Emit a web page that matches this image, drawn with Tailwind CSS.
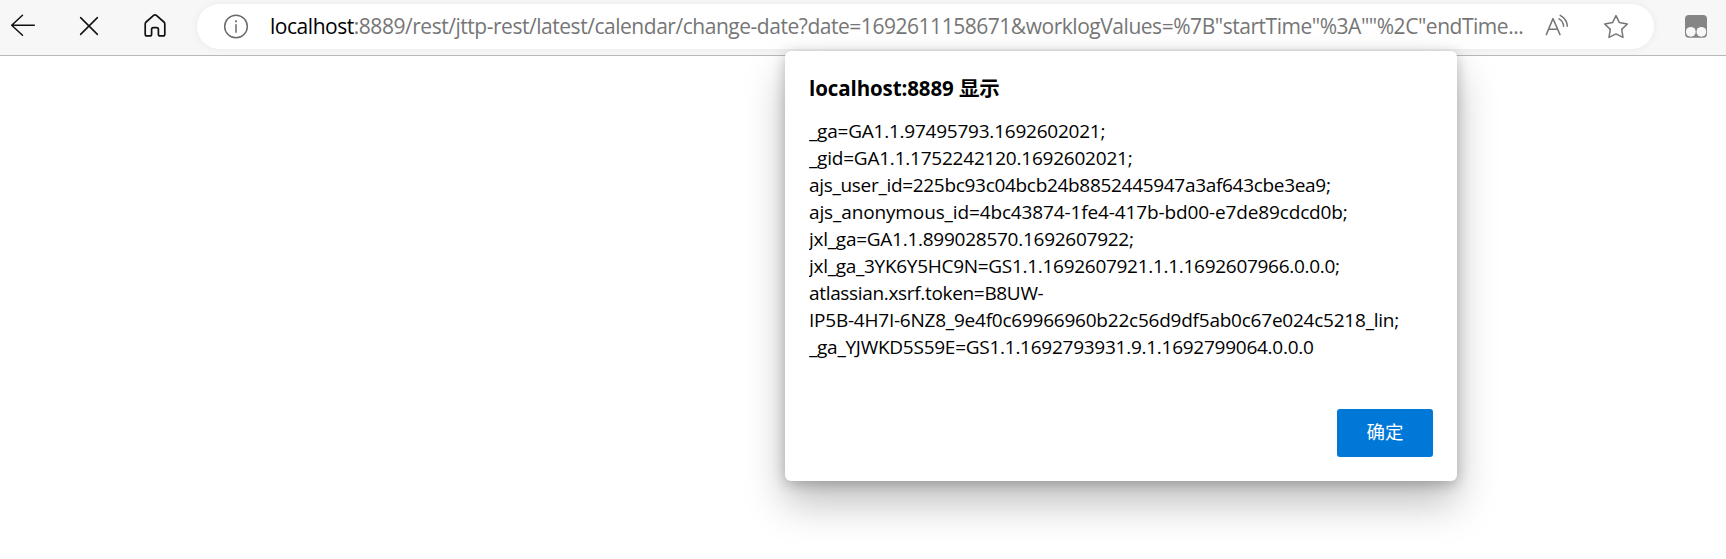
<!DOCTYPE html>
<html lang="zh-CN">
<head>
<meta charset="utf-8">
<title>localhost:8889</title>
<script src="https://cdn.jsdelivr.net/npm/@tailwindcss/browser@4"></script>
</head>
<body class="relative h-[559px] overflow-hidden bg-white font-['Open_Sans','Noto_Sans_CJK_SC',sans-serif] text-black">
<header class="flex h-14 items-start border-b border-[#b9b9b9] bg-[#f7f7f7]">
  <svg class="h-[55px] w-10 shrink-0" viewBox="0 0 40 55" fill="none" stroke="#111" stroke-width="1.5" stroke-linecap="round" stroke-linejoin="round"><path d="M34.3 25.3H11.7M22.5 15.3L11.7 25.3L22.5 35.2"/></svg>
  <svg class="ml-[30px] h-[55px] w-10 shrink-0" viewBox="70 0 40 55" fill="none" stroke="#111" stroke-width="1.5" stroke-linecap="round"><path d="M80.6 17.6L97.4 34.4M97.4 17.6L80.6 34.4"/></svg>
  <svg class="ml-[30px] h-[55px] w-[30px] shrink-0" viewBox="140 0 30 55" fill="none" stroke="#111" stroke-width="1.7" stroke-linejoin="round"><path d="M153.6 15.4Q155 14.3 156.4 15.4L163.9 22Q164.8 22.8 164.8 24V34.2Q164.8 35.9 163.1 35.9H160.2Q158.4 35.9 158.4 34.2V29.3Q158.4 27.6 156.7 27.6H153.3Q151.6 27.6 151.6 29.3V34.2Q151.6 35.9 149.8 35.9H146.9Q145.2 35.9 145.2 34.2V24Q145.2 22.8 146.1 22Z"/></svg>
  <div class="mt-1 ml-[27px] flex h-[45px] w-[1457px] shrink-0 items-center rounded-full bg-white pr-[22px] pl-[25px] shadow-[0_0_8px_rgba(0,0,0,0.06)]">
    <svg class="h-[45px] w-7 shrink-0" viewBox="222 4 28 45" fill="none" stroke="#6b6b6b" stroke-width="1.5"><circle cx="236" cy="26.5" r="11.3"/><path d="M236 24.8V32.3" stroke-linecap="round"/><circle cx="236" cy="21.3" r="1.1" fill="#6b6b6b" stroke="none"/></svg>
    <div class="-mt-px ml-5 text-[21px] leading-7 tracking-[-0.467px] whitespace-nowrap text-[#767676]"><span class="text-black">localhost</span>:8889/rest/jttp-rest/latest/calendar/change-date?date=1692611158671&amp;worklogValues=%7B"startTime"%3A""%2C"endTime...</div>
    <svg class="ml-auto h-[45px] w-[30px] shrink-0" viewBox="1540 4 30 45" fill="none" stroke="#767676" stroke-width="1.5" stroke-linecap="round" stroke-linejoin="round"><path d="M1546.3 34.6L1553 18.6L1560 34.6M1548.5 29.3H1557.7M1559 18.8Q1563.4 21.3 1563.6 26.3M1560.2 15.4Q1567 19 1567.3 26.3"/></svg>
    <svg class="ml-[30px] h-[45px] w-8 shrink-0" viewBox="1600 4 32 45" fill="none" stroke="#767676" stroke-width="1.5" stroke-linejoin="round"><path d="M1616 15.6L1619.4 22.6L1627.3 24L1621.7 29.4L1623 37.4L1616 33.8L1609 37.4L1610.3 29.4L1604.7 24L1612.6 22.6Z"/></svg>
  </div>
  <svg class="ml-[26px] h-[55px] w-8 shrink-0" viewBox="1680 0 32 55"><rect x="1685" y="15" width="22" height="22.7" rx="4" fill="#858585"/><circle cx="1690.8" cy="31.8" r="4.9" fill="#f7f7f7"/><circle cx="1701.4" cy="31.8" r="4.9" fill="#f7f7f7"/></svg>
</header>
<main>
  <section role="alertdialog" class="absolute top-[51px] left-[785px] flex h-[430px] w-[672px] flex-col rounded-[6px] bg-white px-6 pt-[23px] pb-6 shadow-[0_22px_40px_rgba(0,0,0,0.25),0_3px_14px_rgba(0,0,0,0.24)]">
    <h1 class="text-[20.5px] leading-7 font-bold tracking-[-0.1px]">localhost:8889 显示</h1>
    <div class="mt-4 h-[240px] overflow-hidden text-[19px] leading-[27px] whitespace-nowrap">
      <p class="tracking-[-0.23px]">_ga=GA1.1.97495793.1692602021;</p>
      <p class="tracking-[-0.22px]">_gid=GA1.1.1752242120.1692602021;</p>
      <p class="tracking-[-0.31px]">ajs_user_id=225bc93c04bcb24b8852445947a3af643cbe3ea9;</p>
      <p class="tracking-[-0.13px]">ajs_anonymous_id=4bc43874-1fe4-417b-bd00-e7de89cdcd0b;</p>
      <p class="tracking-[-0.26px]">jxl_ga=GA1.1.899028570.1692607922;</p>
      <p class="tracking-[-0.29px]">jxl_ga_3YK6Y5HC9N=GS1.1.1692607921.1.1.1692607966.0.0.0;</p>
      <p class="tracking-[-0.33px]">atlassian.xsrf.token=B8UW-</p>
      <p class="tracking-[-0.23px]">IP5B-4H7I-6NZ8_9e4f0c69966960b22c56d9df5ab0c67e024c5218_lin;</p>
      <p class="tracking-[-0.26px]">_ga_YJWKD5S59E=GS1.1.1692793931.9.1.1692799064.0.0.0</p>
    </div>
    <button class="mt-auto flex h-12 w-24 items-center justify-center self-end rounded-[3px] bg-[#0078d7] pb-0.5 text-[18.5px] leading-7 text-white">确定</button>
  </section>
</main>
</body>
</html>
